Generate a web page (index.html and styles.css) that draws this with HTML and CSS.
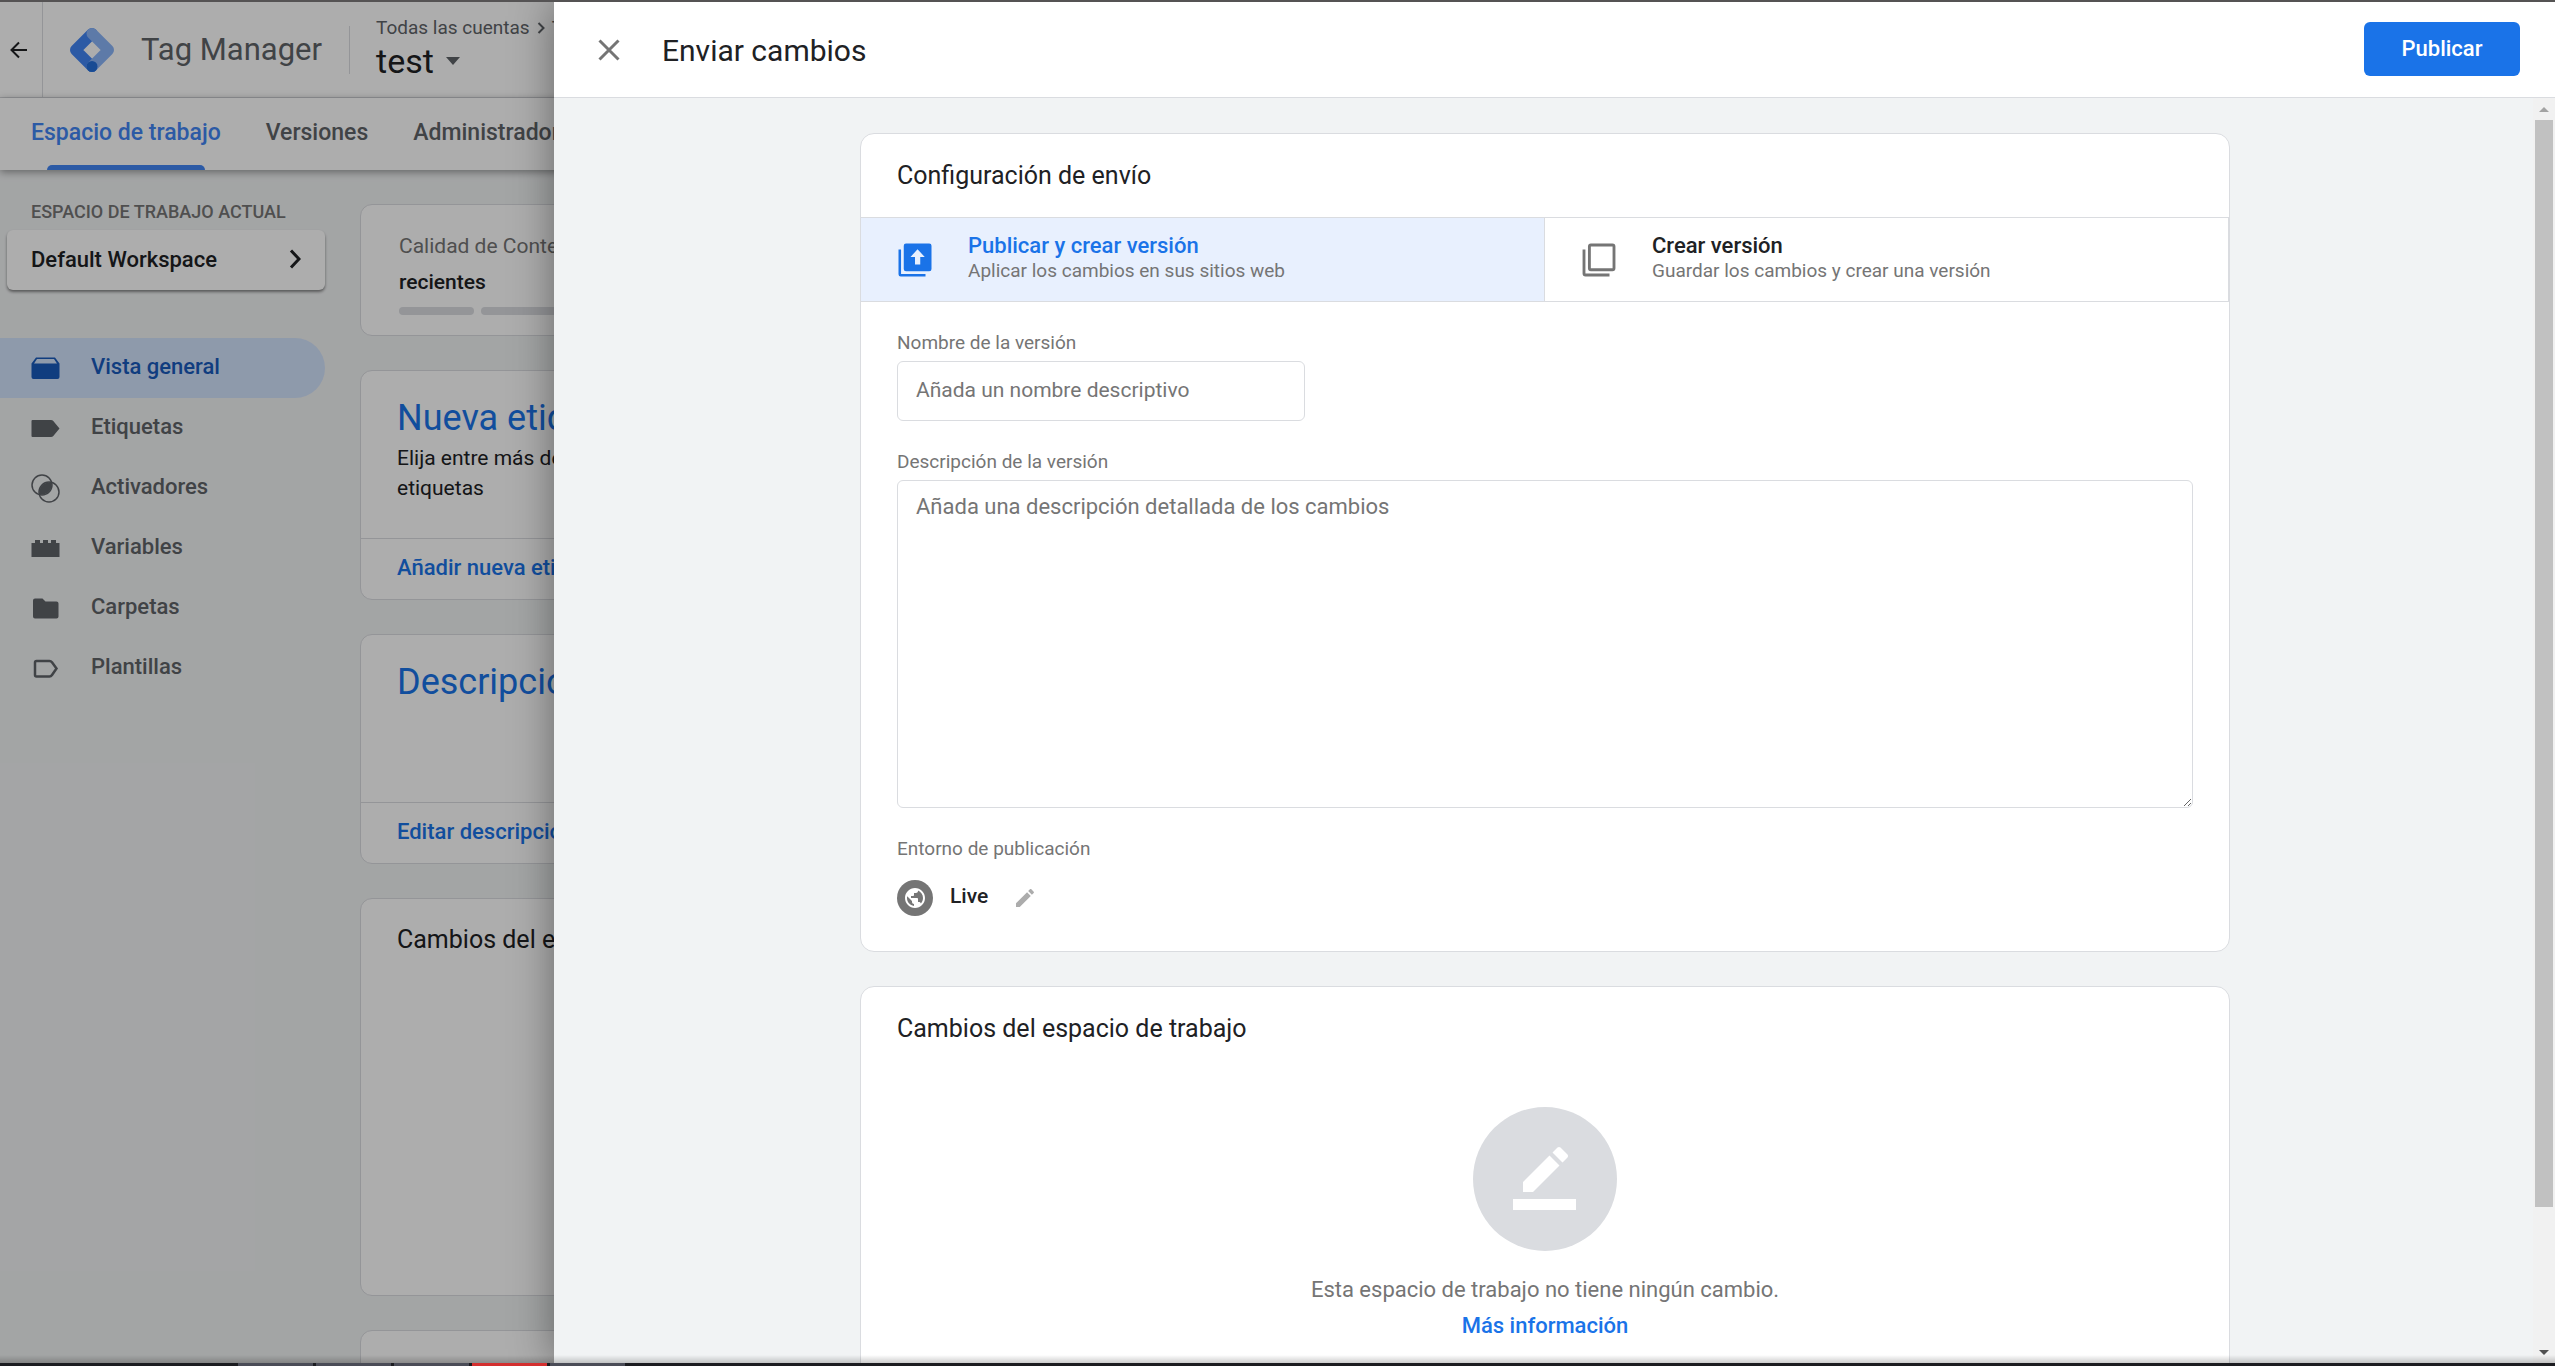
FILE: index.html
```html
<!DOCTYPE html>
<html lang="es">
<head>
    <meta charset="UTF-8">
    <meta name="viewport" content="width=device-width, initial-scale=1.0">
    <title>Tag Manager - Enviar cambios</title>
    <link rel="stylesheet" href="styles.css">
</head>
<body>
    <div class="window-edge"></div>

    <div class="app">
        <header class="topbar">
            <button class="back" aria-label="Volver">
                <svg width="18" height="18" viewBox="0 0 18 18"><path d="M17 9H2M9 1.500L1.500 9L9 16.500" fill="none" stroke="#202124" stroke-width="2"/></svg>
            </button>
            <div class="brand">
                <svg class="logo" width="44" height="44" viewBox="0 0 44 44" fill="none" stroke-width="11" stroke-linejoin="round" stroke-linecap="round">
                    <path d="M22 5.500L5.500 22L22 38.500" stroke="#4285f4"/>
                    <path d="M22 5.500L38.500 22L22 38.500" stroke="#8ab4f8"/>
                    <circle cx="22" cy="38.500" r="5.500" fill="#246fdb" stroke="none"/>
                </svg>
                <span class="brand-name">Tag Manager</span>
            </div>
            <div class="account">
                <div class="crumbs">
                    <span>Todas las cuentas</span>
                    <svg width="8" height="12" viewBox="0 0 8 12"><path d="M1.500 1L6.500 6L1.500 11" fill="none" stroke="#5f6368" stroke-width="2"/></svg>
                    <span>Test</span>
                </div>
                <button class="container-name">test
                    <svg width="14" height="8" viewBox="0 0 14 8"><path d="M0 0H14L7 8Z" fill="#5f6368"/></svg>
                </button>
            </div>
        </header>

        <nav class="tabs">
            <a href="#" class="tab active">Espacio de trabajo</a>
            <a href="#" class="tab">Versiones</a>
            <a href="#" class="tab">Administrador</a>
        </nav>

        <div class="workspace">
            <aside class="sidebar">
                <div class="sidebar-title">ESPACIO DE TRABAJO ACTUAL</div>
                <button class="workspace-picker">
                    Default Workspace
                    <svg width="12" height="20" viewBox="0 0 12 20"><path d="M2 1.500L10 10L2 18.500" fill="none" stroke="#202124" stroke-width="3"/></svg>
                </button>
                <nav class="menu">
                    <a href="#" class="menu-item active">
                        <svg width="29" height="29" viewBox="0 0 29 29"><path d="M5 3.500H24L28.500 9.500V23Q28.500 25 26.500 25H2.500Q.5 25 .5 23V9.500ZM6 5L3 9.500H26L23 5Z" fill="#185abc" fill-rule="evenodd"/></svg>
                        <span>Vista general</span>
                    </a>
                    <a href="#" class="menu-item">
                        <svg width="29" height="29" viewBox="0 0 29 29"><path d="M1.500 6H20Q21.500 6 22.300 7L28.500 14.500L22.300 22Q21.500 23 20 23H1.500Q.5 23 .5 22V7Q.5 6 1.500 6Z" fill="#5f6368"/></svg>
                        <span>Etiquetas</span>
                    </a>
                    <a href="#" class="menu-item">
                        <svg width="29" height="29" viewBox="0 0 29 29"><circle cx="11" cy="11" r="10" fill="none" stroke="#5f6368" stroke-width="1.500"/><circle cx="18" cy="18" r="10" fill="none" stroke="#5f6368" stroke-width="1.500"/><path d="M20.500 8.500A10 10 0 0 0 8.500 20.500A10 10 0 0 0 20.500 8.500Z" fill="#5f6368"/></svg>
                        <span>Activadores</span>
                    </a>
                    <a href="#" class="menu-item">
                        <svg width="29" height="29" viewBox="0 0 29 29"><path d="M.5 9H4V6H9V9H12V6H17V9H20V6H25V9H28.500V23H.5Z" fill="#5f6368"/></svg>
                        <span>Variables</span>
                    </a>
                    <a href="#" class="menu-item">
                        <svg width="29" height="29" viewBox="0 0 29 29"><path d="M4 4.500H11.500L14.500 7.500H25.500Q27.500 7.500 27.500 9.500V22.500Q27.500 24.500 25.500 24.500H4Q2 24.500 2 22.500V6.500Q2 4.500 4 4.500Z" fill="#5f6368"/></svg>
                        <span>Carpetas</span>
                    </a>
                    <a href="#" class="menu-item">
                        <svg width="29" height="29" viewBox="0 0 29 29"><path d="M5.500 7H18.500Q20 7 21 8.200L25.500 14.500L21 21Q20 22.500 18.500 22.500H5.500Q4 22.500 4 21V8.500Q4 7 5.500 7Z" fill="none" stroke="#5f6368" stroke-width="2.500"/></svg>
                        <span>Plantillas</span>
                    </a>
                </nav>
            </aside>

            <main class="overview">
                <section class="tile quality">
                    <div class="quality-title">Calidad de Contenedor</div>
                    <div class="quality-value">recientes</div>
                    <div class="quality-bars"><i></i><i></i><i></i><i></i></div>
                </section>
                <section class="tile">
                    <div class="tile-body">
                        <h2>Nueva etiqueta</h2>
                        <p>Elija entre más de 50 tipos de etiquetas</p>
                    </div>
                    <a href="#" class="tile-link">Añadir nueva etiqueta</a>
                </section>
                <section class="tile">
                    <div class="tile-body">
                        <h2>Descripción</h2>
                    </div>
                    <a href="#" class="tile-link">Editar descripción</a>
                </section>
                <section class="tile changes">
                    <h3>Cambios del espacio de trabajo</h3>
                </section>
                <section class="tile history"></section>
            </main>
        </div>

        <div class="scrim"></div>

        <!-- Submit sheet -->
        <div class="sheet" role="dialog" aria-labelledby="sheet-title">
            <div class="sheet-header">
                <button class="close" aria-label="Cerrar">
                    <svg width="22" height="22" viewBox="0 0 22 22"><path d="M1.500 1.500L20.500 20.500M20.500 1.500L1.500 20.500" stroke="#757575" stroke-width="3"/></svg>
                </button>
                <h1 id="sheet-title">Enviar cambios</h1>
                <button class="publish">Publicar</button>
            </div>

            <div class="sheet-main">
                <div class="sheet-content">
                    <section class="card">
                        <h2 class="card-title">Configuración de envío</h2>
                        <div class="options">
                            <button class="option selected">
                                <svg width="36" height="36" viewBox="0 0 24 24" fill="#1a73e8"><path d="M1 5H2.700V21.300H19V23H2.500Q1 23 1 21.500ZM6 1H21.500Q23 1 23 2.500V18Q23 19.500 21.500 19.500H6Q4.500 19.500 4.500 18V2.500Q4.500 1 6 1ZM13.700 4.800L9 10H12V15H15.500V10H18.500Z" fill-rule="evenodd"/></svg>
                                <span class="option-text">
                                    <strong>Publicar y crear versión</strong>
                                    <small>Aplicar los cambios en sus sitios web</small>
                                </span>
                            </button>
                            <button class="option">
                                <svg width="36" height="36" viewBox="0 0 24 24" fill="none" stroke="#757575" stroke-width="1.900"><rect x="5.600" y="2" width="16.400" height="16.500" rx="1"/><path d="M2 5V21Q2 22 3 22H19"/></svg>
                                <span class="option-text">
                                    <strong>Crear versión</strong>
                                    <small>Guardar los cambios y crear una versión</small>
                                </span>
                            </button>
                        </div>
                        <div class="form">
                            <div class="field">
                                <label for="version-name">Nombre de la versión</label>
                                <input type="text" id="version-name" placeholder="Añada un nombre descriptivo">
                            </div>
                            <div class="field">
                                <label for="version-desc">Descripción de la versión</label>
                                <textarea id="version-desc" placeholder="Añada una descripción detallada de los cambios"></textarea>
                            </div>
                            <div class="env-label">Entorno de publicación</div>
                            <div class="env">
                                <svg width="36" height="36" viewBox="0 0 36 36"><circle cx="18" cy="18" r="18" fill="#757575"/><g transform="translate(6 6)"><path d="M12 2C6.480 2 2 6.480 2 12s4.480 10 10 10 10-4.480 10-10S17.520 2 12 2zm-1 17.930c-3.950-.49-7-3.850-7-7.930 0-.62.08-1.210.21-1.790L9 15v1c0 1.100.9 2 2 2v1.930zm6.900-2.540c-.26-.81-1-1.390-1.900-1.390h-1v-3c0-.55-.45-1-1-1H8v-2h2c.55 0 1-.45 1-1V7h2c1.100 0 2-.9 2-2v-.41c2.930 1.190 5 4.060 5 7.410 0 2.080-.8 3.970-2.100 5.390z" fill="#fff"/></g></svg>
                                <span class="env-name">Live</span>
                                <button class="edit" aria-label="Editar entorno">
                                    <svg width="24" height="24" viewBox="0 0 24 24"><path d="M3 17.250V21h3.750L17.810 9.940l-3.750-3.750L3 17.250zM20.710 7.040c.39-.39.39-1.020 0-1.410l-2.340-2.340c-.39-.39-1.020-.39-1.410 0l-1.830 1.830 3.750 3.750 1.830-1.830z" fill="#acacac"/></svg>
                                </button>
                            </div>
                        </div>
                    </section>

                    <section class="card changes-card">
                        <h2 class="card-title">Cambios del espacio de trabajo</h2>
                        <div class="empty">
                            <svg width="144" height="144" viewBox="0 0 144 144"><circle cx="72" cy="72" r="72" fill="#dadce0"/><path d="M50 85V75L76.500 48.500L86.500 58.500L60 85ZM79.500 45.500L84.500 40.500Q86 39.500 87.500 40.500L94.500 47.500Q95.500 49 94.500 50.500L89.500 55.500ZM40 92H103V103H40Z" fill="#fff"/></svg>
                            <p>Esta espacio de trabajo no tiene ningún cambio.</p>
                            <a href="#">Más información</a>
                        </div>
                    </section>
                </div>

                <div class="scrollbar">
                    <svg width="22" height="22" viewBox="0 0 22 22"><path d="M6 14L11 9L16 14Z" fill="#a3a3a3"/></svg>
                    <div class="track"><div class="thumb"></div></div>
                    <svg width="22" height="22" viewBox="0 0 22 22"><path d="M6 9L11 14L16 9Z" fill="#505050"/></svg>
                </div>
            </div>
        </div>

        <div class="bottom-shade"></div>
    </div>

    <div class="taskbar"><i></i><i></i><i></i><i class="alert"></i><i></i></div>
</body>
</html>
```
FILE: styles.css
```css
* {
    box-sizing: border-box;
}
body {
    margin: 0;
    height: 100vh;
    display: flex;
    flex-direction: column;
    overflow: hidden;
    font-family: Roboto, "Liberation Sans", sans-serif;
    font-size: 21px;
    color: #202124;
    background: #f1f3f4;
}
h1, h2, h3, p {
    margin: 0;
    font-weight: 400;
}
a {
    color: #1a73e8;
    text-decoration: none;
}
button {
    border: none;
    padding: 0;
    background: none;
    font-family: inherit;
    font-size: inherit;
    color: inherit;
    text-align: left;
    cursor: pointer;
}
svg {
    display: block;
    flex: none;
}
.window-edge {
    height: 2px;
    flex: none;
    background: #555354;
}
.app {
    position: relative;
    flex: 1;
    min-height: 0;
    overflow: hidden;
}

/* Header */
.topbar {
    display: flex;
    align-items: center;
    height: 96px;
    background: #fff;
    border-bottom: 1px solid #dadce0;
}
.back {
    display: flex;
    align-items: center;
    justify-content: center;
    width: 43px;
    padding-right: 4px;
    align-self: stretch;
    border-right: 1px solid #dadce0;
}
.brand {
    display: flex;
    align-items: center;
    gap: 27px;
    height: 48px;
    padding: 0 27px;
    border-right: 1px solid #dadce0;
}
.brand-name {
    font-size: 31px;
    color: #5f6368;
}
.account {
    padding: 0 0 3px 26px;
}
.crumbs {
    display: flex;
    align-items: center;
    gap: 7px;
    font-size: 19px;
    line-height: 26px;
    color: #5f6368;
}
.container-name {
    display: flex;
    align-items: center;
    gap: 12px;
    font-size: 34px;
    line-height: 40px;
}
.tabs {
    position: relative;
    display: flex;
    gap: 45px;
    height: 72px;
    padding-left: 31px;
    background: #fff;
    box-shadow: 0 2px 8px rgba(0,0,0,0.4);
}
.tab {
    position: relative;
    font-size: 23px;
    font-weight: 500;
    line-height: 70px;
    color: #5f6368;
}
.tab.active {
    color: #4285f4;
}
.tab.active::after {
    content: "";
    position: absolute;
    left: 16px;
    right: 16px;
    bottom: 0;
    height: 5px;
    border-radius: 5px 5px 0 0;
    background: #4285f4;
}

/* Sidebar */
.workspace {
    display: flex;
    gap: 35px;
}
.sidebar {
    width: 325px;
    padding-top: 30px;
}
.sidebar-title {
    padding-left: 31px;
    font-size: 18px;
    font-weight: 500;
    line-height: 24px;
    color: #757575;
}
.workspace-picker {
    display: flex;
    align-items: center;
    justify-content: space-between;
    width: 318px;
    height: 60px;
    margin: 6px 0 48px 7px;
    padding: 0 24px 2px;
    border-radius: 6px;
    background: #fff;
    box-shadow: 0 2px 3px rgba(0,0,0,0.45);
    font-size: 22px;
    font-weight: 500;
}
.menu-item {
    display: flex;
    align-items: center;
    gap: 31px;
    height: 60px;
    padding-left: 31px;
    font-size: 22px;
    font-weight: 500;
    color: #5f6368;
}
.menu-item span {
    padding-bottom: 3px;
}
.menu-item.active {
    border-radius: 0 30px 30px 0;
    background: #d2e3fc;
    color: #185abc;
}

/* Overview tiles */
.overview {
    display: grid;
    gap: 34px;
    width: 400px;
    padding-top: 34px;
}
.tile {
    border: 1px solid #dadce0;
    border-radius: 12px;
    background: #fff;
    overflow: hidden;
}
.quality {
    height: 132px;
    padding: 23px 38px;
}
.quality-title, .quality-value {
    line-height: 36px;
    color: #757575;
    white-space: nowrap;
}
.quality-value {
    font-weight: 500;
    color: #202124;
}
.quality-bars {
    display: flex;
    gap: 7px;
    padding-top: 7px;
}
.quality-bars i {
    flex: 1;
    height: 8px;
    border-radius: 4px;
    background: #dadce0;
}
.tile-body {
    height: 167px;
    padding: 23px 36px;
}
.tile h2 {
    font-size: 36px;
    line-height: 48px;
    color: #1a73e8;
}
.tile p {
    padding-top: 1px;
    line-height: 30px;
}
.tile-link {
    display: block;
    padding: 0 36px 2px;
    border-top: 1px solid #dadce0;
    font-size: 22px;
    font-weight: 500;
    line-height: 58px;
}
.changes {
    height: 398px;
    padding: 23px 36px;
}
.changes h3 {
    font-size: 25px;
    line-height: 36px;
    white-space: nowrap;
}
.history {
    height: 398px;
}
.scrim {
    position: absolute;
    inset: 0;
    background: rgba(0,0,0,0.32);
}

/* Sheet */
.sheet {
    position: absolute;
    inset: 0 0 0 554px;
    display: flex;
    flex-direction: column;
    background: #f1f3f4;
    box-shadow: 0 0 40px rgba(0,0,0,0.4);
}
.sheet-header {
    display: flex;
    align-items: center;
    height: 96px;
    flex: none;
    padding: 0 35px 0 44px;
    background: #fff;
    border-bottom: 1px solid #dadce0;
}
.sheet-header h1 {
    flex: 1;
    padding: 2px 0 0 42px;
    font-size: 30px;
}
.publish {
    width: 156px;
    height: 54px;
    margin-bottom: 2px;
    border-radius: 6px;
    background: #1a73e8;
    font-size: 22px;
    font-weight: 500;
    color: #fff;
    text-align: center;
}
.sheet-main {
    display: flex;
    flex: 1;
    min-height: 0;
}
.sheet-content {
    flex: 1;
    padding: 35px 35px 0 38px;
    overflow: hidden;
}
.card {
    max-width: 1370px;
    margin: 0 auto 34px;
    border: 1px solid #dadce0;
    border-radius: 14px;
    background: #fff;
}
.card-title {
    padding: 0 36px;
    font-size: 25px;
    line-height: 83px;
}
.options {
    display: grid;
    grid-template-columns: 1fr 1fr;
    border-top: 1px solid #dadce0;
    border-bottom: 1px solid #dadce0;
}
.option {
    display: flex;
    align-items: center;
    gap: 35px;
    height: 83px;
    padding: 0 36px;
    border-right: 1px solid #dadce0;
}
.option.selected {
    background: #e8f0fe;
}
.option-text {
    padding-bottom: 3px;
}
.option-text strong, .option-text small {
    display: block;
}
.option-text strong {
    font-size: 22px;
    font-weight: 500;
    line-height: 26px;
}
.option-text small {
    font-size: 19px;
    line-height: 24px;
    color: #757575;
}
.selected strong {
    color: #1a73e8;
}
.form {
    padding: 29px 36px 35px;
}
.field {
    margin-bottom: 29px;
}
.field label, .env-label {
    display: block;
    margin-bottom: 6px;
    font-size: 19px;
    line-height: 24px;
    color: #757575;
}
.field input, .field textarea {
    display: block;
    padding: 0 18px;
    border: 1px solid #dadce0;
    border-radius: 6px;
    background: #fff;
    font-family: inherit;
    font-size: 21px;
    color: #202124;
}
.field input {
    width: 408px;
    height: 60px;
    padding-bottom: 2px;
}
.field textarea {
    width: 100%;
    height: 328px;
    padding-top: 11px;
    font-size: 22px;
    line-height: 30px;
    resize: both;
}
.field input::placeholder, .field textarea::placeholder {
    color: #757575;
}
.env-label {
    margin-bottom: 19px;
}
.env {
    display: flex;
    align-items: center;
}
.env-name {
    padding: 0 25px 4px 17px;
    font-weight: 500;
}
.empty {
    display: flex;
    flex-direction: column;
    align-items: center;
    padding: 37px 36px 72px;
    font-size: 22px;
    line-height: 36px;
}
.empty p {
    padding-top: 21px;
    color: #757575;
}
.empty a {
    font-weight: 500;
}
.scrollbar {
    display: flex;
    flex-direction: column;
    width: 22px;
    background: #f1f1f1;
}
.track {
    flex: 1;
    padding: 0 2px;
}
.thumb {
    height: 89%;
    background: #c1c1c1;
}

/* Edge of the window */
.bottom-shade {
    position: absolute;
    inset: auto 0 0;
    height: 8px;
    background: linear-gradient(transparent, rgba(0,0,0,0.2));
}
.taskbar {
    display: flex;
    gap: 3px;
    height: 3px;
    flex: none;
    padding-left: 238px;
    background: #1b1c20;
}
.taskbar i {
    width: 75px;
    background: #4a4c57;
}
.taskbar .alert {
    background: #d32f2f;
}
```
